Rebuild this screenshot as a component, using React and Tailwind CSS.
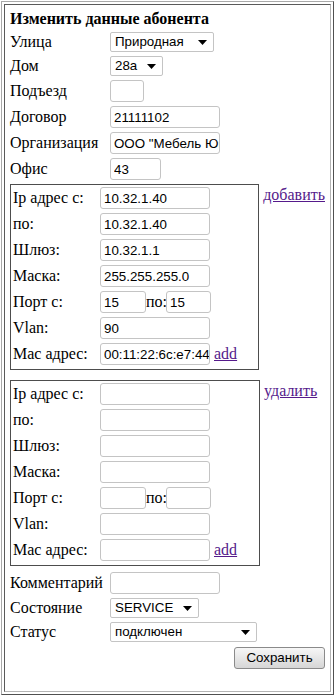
import React from 'react';

const serif = "font-['Liberation_Serif','Times_New_Roman',serif]";
const sans = "font-['Liberation_Sans',Arial,sans-serif]";

const Arrow = () => (
  <svg width="9" height="5" viewBox="0 0 9 5" className="shrink-0">
    <path d="M0 0h9L4.5 5z" fill="#000" />
  </svg>
);

const Field = ({ value = '', w }) => (
  <input
    readOnly
    value={value}
    style={{ width: w }}
    className={`${sans} h-[22px] border border-[#c4c4c4] rounded-[3px] bg-white pl-[3px] text-[13.33px] text-black outline-none`}
  />
);

const Select = ({ value, w }) => (
  <div
    style={{ width: w }}
    className={`${sans} h-[20px] flex items-center justify-between border border-[#c4c4c4] rounded-[2px] bg-white pl-[4px] pr-[6px] text-[13.33px] text-black`}
  >
    <span className="leading-[16px]">{value}</span>
    <Arrow />
  </div>
);

const Row = ({ label, h, children }) => (
  <div className="flex items-center" style={{ height: h }}>
    <div className="w-[100px] leading-[18px] whitespace-nowrap">{label}</div>
    {children}
  </div>
);

const BoxRow = ({ label, children }) => (
  <div className="flex items-center h-[26px]">
    <div className="w-[87px] leading-[18px] whitespace-nowrap">{label}</div>
    {children}
  </div>
);

const IpBlock = ({ data, link }) => (
  <div className="flex items-start">
    <div className="w-[250px] border border-[#4d4d4d] pl-[2px] pb-[2px]">
      <BoxRow label="Ip адрес с:"><Field w={110} value={data.from} /></BoxRow>
      <BoxRow label="по:"><Field w={110} value={data.to} /></BoxRow>
      <BoxRow label="Шлюз:"><Field w={110} value={data.gw} /></BoxRow>
      <BoxRow label="Маска:"><Field w={110} value={data.mask} /></BoxRow>
      <BoxRow label="Порт с:">
        <Field w={46} value={data.p1} />
        <span className="w-[20px] leading-[18px]">по:</span>
        <Field w={45} value={data.p2} />
      </BoxRow>
      <BoxRow label="Vlan:"><Field w={110} value={data.vlan} /></BoxRow>
      <BoxRow label="Mac адрес:">
        <Field w={110} value={data.mac} />
        <a className="ml-[4px] leading-[18px] text-[#551a8b] underline">add</a>
      </BoxRow>
    </div>
    <a className="ml-[4px] mt-[2px] leading-[18px] text-[#551a8b] underline">{link}</a>
  </div>
);

export default function App() {
  const first = {
    from: '10.32.1.40',
    to: '10.32.1.40',
    gw: '10.32.1.1',
    mask: '255.255.255.0',
    p1: '15',
    p2: '15',
    vlan: '90',
    mac: '00:11:22:6c:e7:44',
  };

  return (
    <div className={`${serif} w-[334px] h-[695px] bg-white pl-px pt-px text-[16px] text-black`}>
      <div className="w-[333px] h-[694px] border border-t-[#a9a9a9] border-l-[#a9a9a9] border-r-[#505050] border-b-[#505050] p-[2px]">
        <div className="h-full border border-t-[#5a5a5a] border-l-[#5a5a5a] border-r-[#b4b4b4] border-b-[#b4b4b4] px-[5px]">
          <div className="pt-[5px] pb-[2px] leading-[18px] font-bold">Изменить данные абонента</div>

          <Row label="Улица" h={24}><Select w={104} value="Природная" /></Row>
          <Row label="Дом" h={24}><Select w={53} value="28а" /></Row>
          <Row label="Подъезд" h={26}><Field w={34} /></Row>
          <Row label="Договор" h={26}><Field w={110} value="21111102" /></Row>
          <Row label="Организация" h={26}><Field w={110} value='ООО "Мебель Юг"' /></Row>
          <Row label="Офис" h={26}><Field w={51} value="43" /></Row>

          <div className="mt-[2px]">
            <IpBlock data={first} link="добавить" />
          </div>
          <div className="mt-[10px]">
            <IpBlock data={{}} link="удалить" />
          </div>

          <div className="mt-[4px]">
            <Row label="Комментарий" h={26}><Field w={110} /></Row>
            <Row label="Состояние" h={24}><Select w={89} value="SERVICE" /></Row>
            <Row label="Статус" h={24}><Select w={147} value="подключен" /></Row>
          </div>

          <div className="flex justify-end mt-[3px]">
            <button className={`${sans} h-[22px] w-[91px] border border-[#8a8a8a] rounded-[3px] bg-gradient-to-b from-[#f7f7f7] to-[#d6d6d6] text-[13.33px] text-black`}>
              Сохранить
            </button>
          </div>
        </div>
      </div>
    </div>
  );
}
